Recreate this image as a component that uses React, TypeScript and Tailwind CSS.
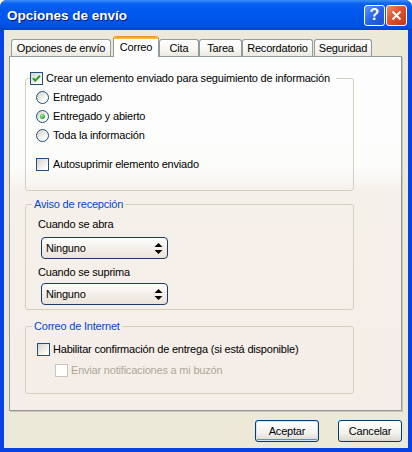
import React from 'react'

function CheckBox({ checked = false, disabled = false }: { checked?: boolean; disabled?: boolean }) {
  return (
    <span
      className={`flex h-[13px] w-[13px] shrink-0 items-center justify-center border ${
        disabled
          ? 'border-[#cac8bb] bg-white'
          : 'border-[#1c5180] bg-[linear-gradient(135deg,#d4d2c8,#ffffff_85%)]'
      }`}
    >
      {checked && (
        <svg width="11" height="11" viewBox="0 0 11 11">
          <polyline points="2,5.2 4.3,7.6 9,2.8" fill="none" stroke="#21a121" strokeWidth="2" />
        </svg>
      )}
    </span>
  )
}

function Radio({ checked = false }: { checked?: boolean }) {
  return (
    <span className="flex h-[13px] w-[13px] shrink-0 items-center justify-center rounded-full border border-[#1c5180] bg-[linear-gradient(135deg,#d2cfc4,#ffffff_75%)]">
      {checked && (
        <span className="h-[5px] w-[5px] rounded-full bg-[radial-gradient(circle_at_40%_35%,#9cf596,#21a121_75%)]" />
      )}
    </span>
  )
}

function Combo({ value }: { value: string }) {
  return (
    <div className="ml-[3px] flex h-[22px] w-[127px] items-center justify-between rounded-[4px] border border-[#1b3a6b] bg-[linear-gradient(to_bottom,#ffffff,#f6f2ee_40%,#ebe3da)] pl-[4px] pr-[4px]">
      <span>{value}</span>
      <svg width="9" height="13" viewBox="0 0 9 13">
        <polygon points="4.5,1 8.5,5 0.5,5" fill="#000" />
        <polygon points="0.5,8 8.5,8 4.5,12" fill="#000" />
      </svg>
    </div>
  )
}

function Tab({ label, active = false, w, ml = '' }: { label: string; active?: boolean; w: string; ml?: string }) {
  if (active) {
    return (
      <div
        className={`relative z-10 -mb-px flex h-[21px] ${w} ${ml} flex-col rounded-t-[3px] border-x border-[#919b9c] bg-white`}
      >
        <div className="h-[3px] rounded-t-[3px] bg-[linear-gradient(to_bottom,#e68b2c,#ffc73c)]" />
        <div className="flex flex-1 items-center justify-center pb-[1px]">{label}</div>
      </div>
    )
  }
  return (
    <div
      className={`flex h-[17px] ${w} ${ml} items-center justify-center rounded-t-[3px] border-x border-t border-[#919b9c] bg-[linear-gradient(to_bottom,#ffffff,#f7f6f2_60%,#ebe9e1)] pt-[1px]`}
    >
      {label}
    </div>
  )
}

function XpButton({ label, def = false }: { label: string; def?: boolean }) {
  return (
    <div
      className={`flex h-[22px] w-[64px] items-center justify-center rounded-[3px] border border-[#003c74] bg-[linear-gradient(to_bottom,#ffffff,#f2f1ec_60%,#dcd8cc)] ${
        def ? 'shadow-[inset_0_0_0_1px_#cee7ff,inset_0_-1px_0_1px_#6982ee]' : ''
      }`}
    >
      {label}
    </div>
  )
}

export default function App() {
  return (
    <div className="flex h-[452px] w-[412px] flex-col overflow-hidden rounded-t-[7px] bg-[#0842e2] text-[11px] leading-[13px] tracking-[-0.2px] text-black [font-family:'Liberation_Sans',Arial,sans-serif]">
      {/* Title bar */}
      <div className="flex h-[30px] shrink-0 items-center justify-between bg-[linear-gradient(to_bottom,#3d8ffc_0%,#0a62f2_12%,#0058ee_35%,#0055e8_70%,#004ee0_90%,#0042cc_100%)] pl-[7px] pr-[5px]">
        <span className="pt-[2px] text-[13.5px] font-bold leading-[16px] tracking-normal text-white [text-shadow:1px_1px_0_#0a1883]">
          Opciones de envío
        </span>
        <div className="flex gap-[1px]">
          <div className="flex h-[21px] w-[21px] items-center justify-center rounded-[3px] border border-white bg-[linear-gradient(135deg,#5d95ff,#2563e8_50%,#1e50d0)] text-[16px] font-bold leading-none tracking-normal text-white">
            ?
          </div>
          <div className="flex h-[21px] w-[21px] items-center justify-center rounded-[3px] border border-white bg-[linear-gradient(135deg,#f08a6c,#e2512c_45%,#c33a13)]">
            <svg width="11" height="11" viewBox="0 0 11 11">
              <path d="M1.5 1.5 L9.5 9.5 M9.5 1.5 L1.5 9.5" stroke="#fff" strokeWidth="2" />
            </svg>
          </div>
        </div>
      </div>

      {/* Body */}
      <div className="mx-[4px] mb-[4px] flex flex-1 flex-col bg-[#ece9d8] pt-[6px]">
        {/* Tabs */}
        <div className="flex h-[20px] items-end pl-[7px]">
          <Tab label="Opciones de envío" w="w-[100px]" />
          <Tab label="Correo" active w="w-[46px]" ml="ml-[2px]" />
          <Tab label="Cita" w="w-[40px]" />
          <Tab label="Tarea" w="w-[43px]" />
          <Tab label="Recordatorio" w="w-[71px]" />
          <Tab label="Seguridad" w="w-[58px]" ml="ml-[1px]" />
        </div>

        {/* Panel */}
        <div className="ml-[5px] flex h-[355px] w-[393px] flex-col border border-[#919b9c] bg-[linear-gradient(to_bottom,#fdfdfe_0px,#fcfcfb_110px,#f6f0ea_135px,#f5eee8_100%)] pl-[15px] shadow-[1px_1px_0_0_#c9c6b8]">
          {/* Group 1 */}
          <fieldset className="mt-[15px] w-[329px] rounded-[3px] border border-[#d0d0bf] pb-[19px] pl-[10px]">
            <legend className="ml-[-6px] flex items-center gap-[3px] pr-[6px]">
              <CheckBox checked />
              <span>Crear un elemento enviado para seguimiento de información</span>
            </legend>
            <div className="mt-[6px] flex flex-col gap-[6px]">
              <label className="flex items-center gap-[4px]">
                <Radio />
                <span>Entregado</span>
              </label>
              <label className="flex items-center gap-[4px]">
                <Radio checked />
                <span>Entregado y abierto</span>
              </label>
              <label className="flex items-center gap-[4px]">
                <Radio />
                <span>Toda la información</span>
              </label>
            </div>
            <label className="mt-[16px] flex items-center gap-[4px]">
              <CheckBox />
              <span>Autosuprimir elemento enviado</span>
            </label>
          </fieldset>

          {/* Group 2 */}
          <fieldset className="mt-[7px] w-[329px] rounded-[3px] border border-[#d0d0bf] pb-[4px] pl-[12px]">
            <legend className="ml-[-6px] px-[2px] text-[#0046d5]">Aviso de recepción</legend>
            <div className="mt-[7px]">Cuando se abra</div>
            <div className="mt-[6px]">
              <Combo value="Ninguno" />
            </div>
            <div className="mt-[7px]">Cuando se suprima</div>
            <div className="mt-[4px]">
              <Combo value="Ninguno" />
            </div>
          </fieldset>

          {/* Group 3 */}
          <fieldset className="mt-[10px] w-[329px] rounded-[3px] border border-[#d0d0bf] pb-[16px] pl-[11px]">
            <legend className="ml-[-5px] px-[2px] text-[#0046d5]">Correo de Internet</legend>
            <label className="mt-[10px] flex items-center gap-[3px]">
              <CheckBox />
              <span>Habilitar confirmación de entrega (si está disponible)</span>
            </label>
            <label className="ml-[18px] mt-[8px] flex items-center gap-[3px] text-[#aca899]">
              <CheckBox disabled />
              <span>Enviar notificaciones a mi buzón</span>
            </label>
          </fieldset>
        </div>

        {/* Buttons */}
        <div className="mr-[6px] mt-[9px] flex justify-end gap-[19px]">
          <XpButton label="Aceptar" def />
          <XpButton label="Cancelar" />
        </div>
      </div>
    </div>
  )
}
